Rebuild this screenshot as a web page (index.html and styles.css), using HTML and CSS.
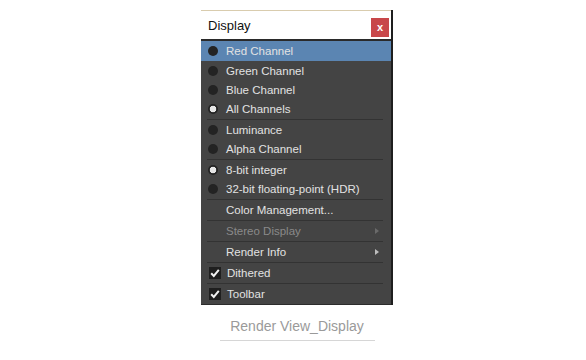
FILE: index.html
```html
<!DOCTYPE html>
<html lang="en">
  <head>
    <meta charset="UTF-8" />
    <title>Render View_Display</title>
    <link rel="stylesheet" href="styles.css">
  </head>
  <body>
    <div class="figure">
      <div class="panel">
        <div class="header">
          <span class="title">Display</span>
          <span class="close">x</span>
        </div>
        <ul class="menu">
          <li class="item active"><span class="radio"></span>Red Channel</li>
          <li class="item"><span class="radio"></span>Green Channel</li>
          <li class="item"><span class="radio"></span>Blue Channel</li>
          <li class="item"><span class="radio on"></span>All Channels</li>
          <li class="sep"></li>
          <li class="item"><span class="radio"></span>Luminance</li>
          <li class="item"><span class="radio"></span>Alpha Channel</li>
          <li class="sep"></li>
          <li class="item"><span class="radio on"></span>8-bit integer</li>
          <li class="item"><span class="radio"></span>32-bit floating-point (HDR)</li>
          <li class="sep"></li>
          <li class="item"><span class="blank"></span>Color Management...</li>
          <li class="sep"></li>
          <li class="item disabled"><span class="blank"></span>Stereo Display<span class="arrow"></span></li>
          <li class="sep"></li>
          <li class="item"><span class="blank"></span>Render Info<span class="arrow"></span></li>
          <li class="sep"></li>
          <li class="item"><span class="check"><svg width="12" height="12" viewBox="0 0 12 12"><path d="M2.2 6.2 L4.8 8.9 L9.8 2.8" fill="none" stroke="#f2f2f2" stroke-width="2"/></svg></span>Dithered</li>
          <li class="sep"></li>
          <li class="item"><span class="check"><svg width="12" height="12" viewBox="0 0 12 12"><path d="M2.2 6.2 L4.8 8.9 L9.8 2.8" fill="none" stroke="#f2f2f2" stroke-width="2"/></svg></span>Toolbar</li>
        </ul>
      </div>
      <div class="caption">Render View_Display</div>
    </div>
  </body>
</html>
```

FILE: styles.css
```css
body {
  margin: 0;
  padding-top: 10px;
  background: #fff;
  font-family: "Liberation Sans", Arial, sans-serif;
}

.figure {
  width: 192px;
  margin-left: 201px;
}

.panel {
  border-right: 2px solid #1e1e1e;
  background: #444444;
}

.header {
  display: flex;
  align-items: center;
  justify-content: space-between;
  height: 28px;
  padding: 0 2px 0 7px;
  background: #fff;
  border-top: 1px solid #d9ccae;
  border-bottom: 2px solid #2a2a2a;
}

.title {
  margin-top: 1px;
  font-size: 13px;
  color: #111;
}

.close {
  display: flex;
  align-items: center;
  justify-content: center;
  width: 18px;
  height: 19px;
  margin-top: 4px;
  background: #c8474a;
  color: #fff;
  font-size: 11px;
  font-weight: bold;
}

.menu {
  list-style: none;
  margin: 0;
  padding: 0 0 1px;
  border-bottom: 1px solid #2c2c2c;
}

.item {
  display: flex;
  align-items: center;
  height: 19px;
  padding-left: 7px;
  font-size: 11.5px;
  color: #e2e2e2;
}

.item.active {
  height: 20px;
  background: #5b85b2;
}

.item.disabled {
  color: #8a8a8a;
}

.radio {
  width: 10px;
  height: 10px;
  margin-right: 8px;
  border-radius: 50%;
  background: #232323;
}

.radio.on {
  background: #232323 radial-gradient(circle, #e6e6e6 0, #e6e6e6 3px, transparent 3.6px);
}

.blank {
  width: 18px;
}

.check {
  display: flex;
  width: 12px;
  height: 12px;
  margin: 0 6px 0 1px;
  background: #1f1f1f;
}

.arrow {
  margin-left: auto;
  margin-right: 12px;
  border-left: 4px solid #bdbdbd;
  border-top: 3px solid transparent;
  border-bottom: 3px solid transparent;
}

.disabled .arrow {
  border-left-color: #6a6a6a;
}

.sep {
  height: 1px;
  margin: 1px 8px 0 6px;
  background: #333333;
}

.caption {
  width: 155px;
  margin: 0 auto;
  padding: 13px 0 6px;
  border-bottom: 1px solid #d6d6d6;
  text-align: center;
  font-size: 14px;
  color: #9a9a9a;
}
```
